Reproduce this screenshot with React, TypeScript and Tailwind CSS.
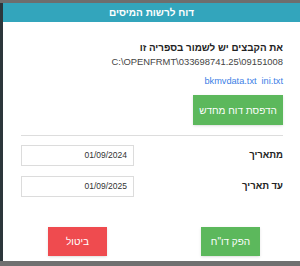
import React from "react";

export default function App() {
  const font = { fontFamily: '"Liberation Sans", Arial, "DejaVu Sans", sans-serif' };
  return (
    <div className="w-[300px] h-[266px] bg-[#6b6b6b] flex flex-col overflow-hidden" style={font}>
      <div className="h-[3px] bg-[#6e6e6e] shrink-0"></div>
      <div className="flex flex-1">
        <div className="w-[3px] bg-[#2c363b] shrink-0"></div>
        <div dir="rtl" className="flex-1 bg-white flex flex-col">
          <div className="h-[19px] bg-[#33a5bc] flex items-center justify-center text-white font-bold text-[10px]">
            דוח לרשות המיסים
          </div>
          <div className="flex flex-col pr-[17px] pl-[18px]">
            <div className="mt-[20px] font-bold text-[9.8px] text-[#222] leading-[12px]">את הקבצים יש לשמור בספריה זו</div>
            <div className="mt-[2px] text-[9.4px] text-[#444] leading-[12px]">
              <span dir="ltr">C:\OPENFRMT\033698741.25\09151008</span>
            </div>
            <div className="mt-[7px] text-[9.2px] text-[#3b80e6] leading-[12px] flex gap-[5px]">
              <span>ini.txt</span>
              <span>bkmvdata.txt</span>
            </div>
            <div className="mt-[8px] flex">
              <button className="w-[90px] h-[30px] bg-[#5cb85c] text-white text-[10px] shadow-sm">הדפסת דוח מחדש</button>
            </div>
            <div className="mt-[10px] h-px bg-[#dddddd]"></div>
            <div className="mt-[9px] flex items-center justify-between">
              <span className="font-bold text-[9.5px] text-[#222]">מתאריך</span>
              <div className="w-[113px] h-[21px] border border-[#dcdcdc] flex items-center px-[6px] text-[8.5px] text-[#333]">01/09/2024</div>
            </div>
            <div className="mt-[10px] flex items-center justify-between">
              <span className="font-bold text-[9.5px] text-[#222]">עד תאריך</span>
              <div className="w-[113px] h-[21px] border border-[#dcdcdc] flex items-center px-[6px] text-[8.5px] text-[#333]">01/09/2025</div>
            </div>
            <div className="mt-[30px] flex justify-between pr-[23px] pl-[27px]">
              <button className="w-[59px] h-[29px] bg-[#5cb85c] text-white text-[10px] shadow-sm">הפק דו"ח</button>
              <button className="w-[59px] h-[29px] bg-[#ef4b4f] text-white text-[10px] shadow-sm">ביטול</button>
            </div>
          </div>
        </div>
      </div>
      <div className="h-[5px] bg-[#707070] shrink-0"></div>
    </div>
  );
}
